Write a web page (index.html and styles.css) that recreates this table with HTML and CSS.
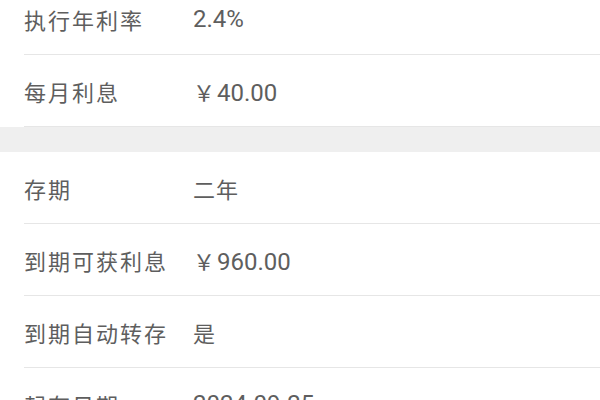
FILE: index.html
```html
<!DOCTYPE html>
<html lang="zh-CN">
<head>
<meta charset="utf-8">
<link rel="stylesheet" href="styles.css">
</head>
<body>
<div class="page">
  <section class="group group-first">
    <div class="row"><span class="label">执行年利率</span><span class="value num">2.4%</span></div>
    <div class="row"><span class="label">每月利息</span><span class="value num"><span class="yen">￥</span>40.00</span></div>
  </section>
  <div class="gap"></div>
  <section class="group">
    <div class="row"><span class="label">存期</span><span class="value">二年</span></div>
    <div class="row"><span class="label">到期可获利息</span><span class="value num"><span class="yen">￥</span>960.00</span></div>
    <div class="row"><span class="label">到期自动转存</span><span class="value">是</span></div>
    <div class="row"><span class="label">起存日期</span><span class="value num">2024-09-25</span></div>
  </section>
</div>
</body>
</html>
```
FILE: styles.css
```css
html, body {
  margin: 0;
  padding: 0;
  background: #ffffff;
}
body {
  width: 600px;
  height: 400px;
  overflow: hidden;
  font-family: "Roboto", "Noto Sans CJK SC", sans-serif;
  color: #5e5e5e;
}
.page {
  display: flex;
  flex-direction: column;
}
.group {
  display: flex;
  flex-direction: column;
  background: #ffffff;
}
.group-first {
  margin-top: -17px;
}
.row {
  display: flex;
  align-items: center;
  height: 71px;
  margin-left: 24px;
  border-bottom: 1px solid #e6e6e6;
}
.label {
  width: 169px;
  flex-shrink: 0;
  font-size: 22px;
  letter-spacing: 2px;
}
.value {
  font-size: 22px;
  letter-spacing: 1px;
}
.num {
  font-size: 24px;
  letter-spacing: 0;
}
.yen {
  font-family: "Noto Sans CJK SC", sans-serif;
  font-size: 22px;
  margin-right: 2px;
}
.gap {
  height: 25px;
  background: #efefef;
}
```
